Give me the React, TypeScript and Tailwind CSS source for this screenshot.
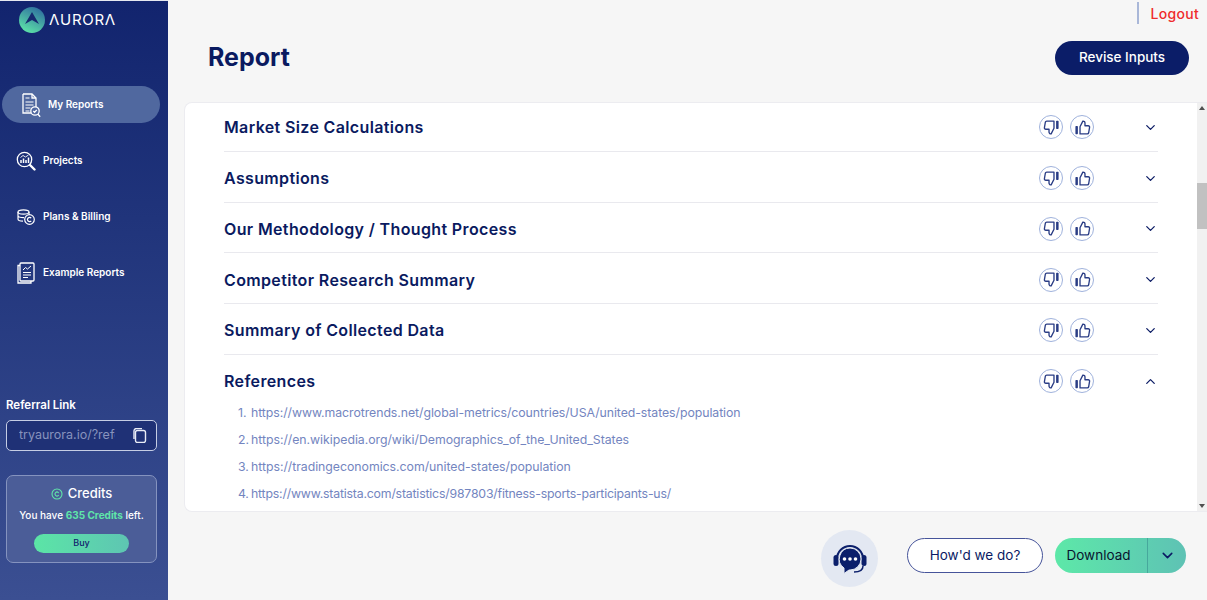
import React from "react";
import { ChevronDown, ChevronUp, Copyright } from "lucide-react";

function ReportIcon() {
  return (
    <svg width="20" height="26" viewBox="0 0 20 26" fill="none" stroke="#fff" strokeWidth="1.3">
      <path d="M2 2h9l4 4v9M2 2v19h8" />
      <path d="M11 2v4h4" />
      <path d="M4.500 6h4M4.500 10h8M4.500 13h8M4.500 16h5M4.500 19h4" strokeWidth="1.100" />
      <circle cx="14" cy="19" r="4.200" />
      <path d="M12.300 19l1.300 1.300 2.200-2.400M17 22.300l2.200 2.400" />
    </svg>
  );
}
function ProjectsIcon() {
  return (
    <svg width="20" height="20" viewBox="0 0 20 20" fill="none" stroke="#fff" strokeWidth="1.300">
      <circle cx="8.500" cy="8.500" r="7.200" />
      <path d="M5 12V9M7.500 12V7.500M10 12V9M12.500 12V6.500" strokeWidth="1.500" />
      <path d="M4.500 6.500l2.500-2 2.500 1.500 3-2" strokeWidth="0.900" />
      <path d="M14 14l4.500 4.500" strokeWidth="2.400" strokeLinecap="round" />
    </svg>
  );
}
function BillingIcon() {
  return (
    <svg width="20" height="16" viewBox="0 0 20 16" fill="none" stroke="#fff" strokeWidth="1.200">
      <ellipse cx="7.500" cy="3" rx="5.500" ry="2.200" />
      <path d="M2 3v7c0 1.200 2 2.200 5 2.200M13 3v2.500M2 6.500c0 1.200 2.500 2.200 6 2.200" />
      <circle cx="13.500" cy="10.500" r="4.800" />
      <path d="M15.200 9.200a2.100 2.100 0 1 0 0 2.600" />
    </svg>
  );
}
function ExampleIcon() {
  return (
    <svg width="18" height="22" viewBox="0 0 18 22" fill="none" stroke="#fff" strokeWidth="1.300">
      <rect x="3" y="1" width="14" height="18" rx="1" />
      <path d="M3 3.500H1V21h13v-2" />
      <path d="M6 8l2.500-2.500 2 1.500L14 4" strokeWidth="1" />
      <path d="M6 10.500h8M6 13h8M6 15.500h5" strokeWidth="1.100" />
    </svg>
  );
}
function CopyGlyph() {
  return (
    <svg width="14" height="15" viewBox="0 0 14 15" fill="none" stroke="#e8ecf6" strokeWidth="1.400">
      <rect x="2.500" y="2.500" width="10" height="12" rx="2" />
      <path d="M1 11V3a2.500 2.500 0 0 1 2.500-2.500H9" />
    </svg>
  );
}
function Logo() {
  return (
    <svg width="26" height="26" viewBox="0 0 26 26">
      <defs>
        <linearGradient id="lg" x1="0.200" y1="1" x2="0.700" y2="0">
          <stop offset="0" stopColor="#5fe8a8" />
          <stop offset="1" stopColor="#2f6f9f" />
        </linearGradient>
      </defs>
      <circle cx="13" cy="13" r="13" fill="url(#lg)" />
      <path d="M13 5l7 12-7-4-7 4z" fill="#16296f" />
    </svg>
  );
}
function Headset() {
  return (
    <svg width="36" height="36" viewBox="0 0 36 36">
      <path d="M5 18a13 13 0 0 1 26 0" fill="none" stroke="#0b1f6b" strokeWidth="2" />
      <rect x="1.500" y="14" width="5" height="11" rx="2.500" fill="#0b1f6b" />
      <rect x="29.500" y="14" width="5" height="11" rx="2.500" fill="#0b1f6b" />
      <path d="M18 7a11 11 0 0 1 0 22h-1l-5 3.500V27A11 11 0 0 1 18 7z" fill="#0b1f6b" stroke="#e3e8f2" strokeWidth="1" />
      <circle cx="12.500" cy="18" r="1.800" fill="#fff" />
      <circle cx="18" cy="18" r="1.800" fill="#fff" />
      <circle cx="23.500" cy="18" r="1.800" fill="#fff" />
      <path d="M31 25c0 4-4 6-9 6" fill="none" stroke="#0b1f6b" strokeWidth="1.500" />
    </svg>
  );
}

function Thumb({ down }: { down?: boolean }) {
  return (
    <svg width="17" height="17" viewBox="0 0 24 24" className={down ? "rotate-180" : ""}>
      <rect x="2" y="10" width="3.500" height="11.500" rx="1" fill="#2a3d85" />
      <path
        d="M8.500 11l4-8a2.500 2.500 0 0 1 3 2.500V9.500h4.500a2 2 0 0 1 2 2.400l-1.300 7.500a2 2 0 0 1-2 1.600H8.500z"
        fill="none"
        stroke="#2a3d85"
        strokeWidth="1.900"
        strokeLinejoin="round"
      />
    </svg>
  );
}

function Vote({ down }: { down?: boolean }) {
  return (
    <span className="flex h-[24px] w-[24px] items-center justify-center rounded-full border border-[#9fb2dc]">
      <Thumb down={down} />
    </span>
  );
}

function Row({ title, open, last }: { title: string; open?: boolean; last?: boolean }) {
  const Chev = open ? ChevronUp : ChevronDown;
  return (
    <div className={`flex h-[50.750px] items-center pt-[3px] ${last ? "pb-[1px]" : "border-b border-[#e9e9ee]"}`}>
      <h3 className="flex-1 text-[16px] font-semibold tracking-[0.36px] text-[#0a1a60]">{title}</h3>
      <div className="flex items-center gap-[7px]">
        <Vote down />
        <Vote />
      </div>
      <div className="flex w-[64px] justify-end">
        <Chev size={15} strokeWidth={2} className="text-[#0b1b64]" />
      </div>
    </div>
  );
}

const nav = [
  { label: "Projects", icon: <ProjectsIcon /> },
  { label: "Plans & Billing", icon: <BillingIcon /> },
  { label: "Example Reports", icon: <ExampleIcon /> },
];

const refs = [
  { url: "https://www.macrotrends.net/global-metrics/countries/USA/united-states/population", cls: "tracking-[-0.06px]" },
  { url: "https://en.wikipedia.org/wiki/Demographics_of_the_United_States", cls: "tracking-[-0.03px]" },
  { url: "https://tradingeconomics.com/united-states/population", cls: "tracking-[-0.03px]" },
  { url: "https://www.statista.com/statistics/987803/fitness-sports-participants-us/", cls: "tracking-[-0.19px]" },
];

export default function App() {
  return (
    <div className="flex h-[600px] w-[1207px] overflow-hidden bg-[#f6f6f6] [font-family:Inter,'Liberation_Sans',sans-serif]">
      <aside className="flex h-full w-[168px] shrink-0 flex-col border-t border-[#e6e8f0] bg-gradient-to-b from-[#12246e] to-[#3b4f92] pt-[6px] text-white">
        <div className="flex items-center gap-[4px] pl-[19px]">
          <Logo />
          <span className="text-[15px] tracking-[0.7px] text-white">ΛURORΛ</span>
        </div>
        <nav className="mt-[53px] flex flex-col pl-[2px]">
          <a className="flex h-[37px] w-[158px] items-center gap-[7px] rounded-full bg-[#50689f] pl-[19px] text-[10px] font-semibold">
            <ReportIcon />
            My Reports
          </a>
          {nav.map((n) => (
            <a key={n.label} className="mt-[19px] flex h-[37px] items-center gap-[7px] pl-[14px] text-[10px] font-semibold">
              <span className="flex w-[20px] justify-center">{n.icon}</span>
              {n.label}
            </a>
          ))}
        </nav>
        <div className="flex-1" />
        <div className="px-[6px] pb-[37px]">
          <p className="text-[11.500px] font-semibold">Referral Link</p>
          <div className="mt-[6px] flex h-[31px] w-[151px] items-center justify-between rounded-[5px] border border-[#c5cde4] bg-[#1f3176] pl-[12px] pr-[9px]">
            <span className="w-[96px] overflow-hidden whitespace-nowrap text-[12.500px] text-[#8793bd]">tryaurora.io/?refe</span>
            <CopyGlyph />
          </div>
          <div className="mt-[24px] flex h-[88px] w-[151px] flex-col items-center rounded-[7px] border border-[#8593bf] bg-[#4b5d98] pt-[8px]">
            <div className="flex items-center gap-[5px] text-[13px] font-medium">
              <Copyright size={12} className="text-[#5fe6a9]" strokeWidth={2.200} />
              Credits
            </div>
            <p className="mt-[4px] text-[10px] font-medium">
              You have <span className="font-bold text-[#5fe6a9]">635 Credits</span> left.
            </p>
            <button className="mt-[11px] h-[19px] w-[95px] rounded-full bg-gradient-to-r from-[#5be5a6] to-[#5ec5b2] text-[9px] font-medium text-[#12246e]">
              Buy
            </button>
          </div>
        </div>
      </aside>

      <main className="flex min-w-0 flex-1 flex-col">
        <div className="flex justify-end">
          <div className="mt-[2px] flex h-[22px] items-center">
            <span className="h-[22px] w-[2px] bg-[#a9b7d8]" />
            <a className="ml-[12px] mr-[8px] text-[14px] font-medium tracking-[0.3px] text-[#ef2b2b]">Logout</a>
          </div>
        </div>
        <div className="flex items-start justify-between pl-[40px] pr-[18px] pt-[17px]">
          <h1 className="text-[25px] font-bold leading-[32px] text-[#0a1a60]">Report</h1>
          <button className="h-[34px] w-[134px] rounded-full bg-[#0b1d68] pb-[2px] text-[13.500px] font-medium text-white">
            Revise Inputs
          </button>
        </div>

        <section className="ml-[16px] mt-[27px] flex h-[410px] overflow-hidden rounded-l-[8px] border border-r-0 border-[#ececf0] bg-white">
          <div className="min-w-0 flex-1 -mt-[2px] pl-[39px] pr-[39px]">
            <Row title="Market Size Calculations" />
            <Row title="Assumptions" />
            <Row title="Our Methodology / Thought Process" />
            <Row title="Competitor Research Summary" />
            <Row title="Summary of Collected Data" />
            <Row title="References" open last />
            <ol className="ml-[14px] mt-[-7px] list-none text-[12.300px] text-[#7385c0]">
              {refs.map((r, i) => (
                <li key={r.url} className={`flex h-[27px] leading-[27px] ${r.cls}`}>
                  <span className="w-[13px] shrink-0">{i + 1}.</span>
                  <span>{r.url}</span>
                </li>
              ))}
            </ol>
          </div>
          <div className="flex w-[10px] shrink-0 flex-col items-center bg-[#f1f1f1]">
            <span className="mt-[3px] h-0 w-0 border-x-[3.500px] border-b-[4px] border-x-transparent border-b-[#505050]" />
            <span className="mt-[73px] h-[46px] w-full bg-[#c1c1c1]" />
            <span className="flex-1" />
            <span className="mb-[3px] h-0 w-0 border-x-[3.500px] border-t-[4px] border-x-transparent border-t-[#505050]" />
          </div>
        </section>

        <div className="flex items-center justify-end pr-[21px] pt-[18px]">
          <span className="flex h-[57px] w-[57px] items-center justify-center rounded-full bg-[#e3e8f2]">
            <Headset />
          </span>
          <div className="mb-[6px] flex items-center">
            <button className="ml-[29px] h-[35px] w-[136px] rounded-full border border-[#46549a] bg-white text-[13.500px] text-[#0b1b64]">
              How'd we do?
            </button>
            <div className="ml-[12px] flex h-[35px] w-[131px] overflow-hidden rounded-full bg-gradient-to-r from-[#5de8a8] to-[#5ec2b4] text-[13.500px] text-[#08142f]">
              <span className="flex w-[93px] items-center justify-center border-r border-[#47a89c] pr-[5px]">Download</span>
              <span className="flex flex-1 items-center justify-center">
                <ChevronDown size={17} strokeWidth={2.200} className="text-[#0b1b64]" />
              </span>
            </div>
          </div>
        </div>
      </main>
    </div>
  );
}
